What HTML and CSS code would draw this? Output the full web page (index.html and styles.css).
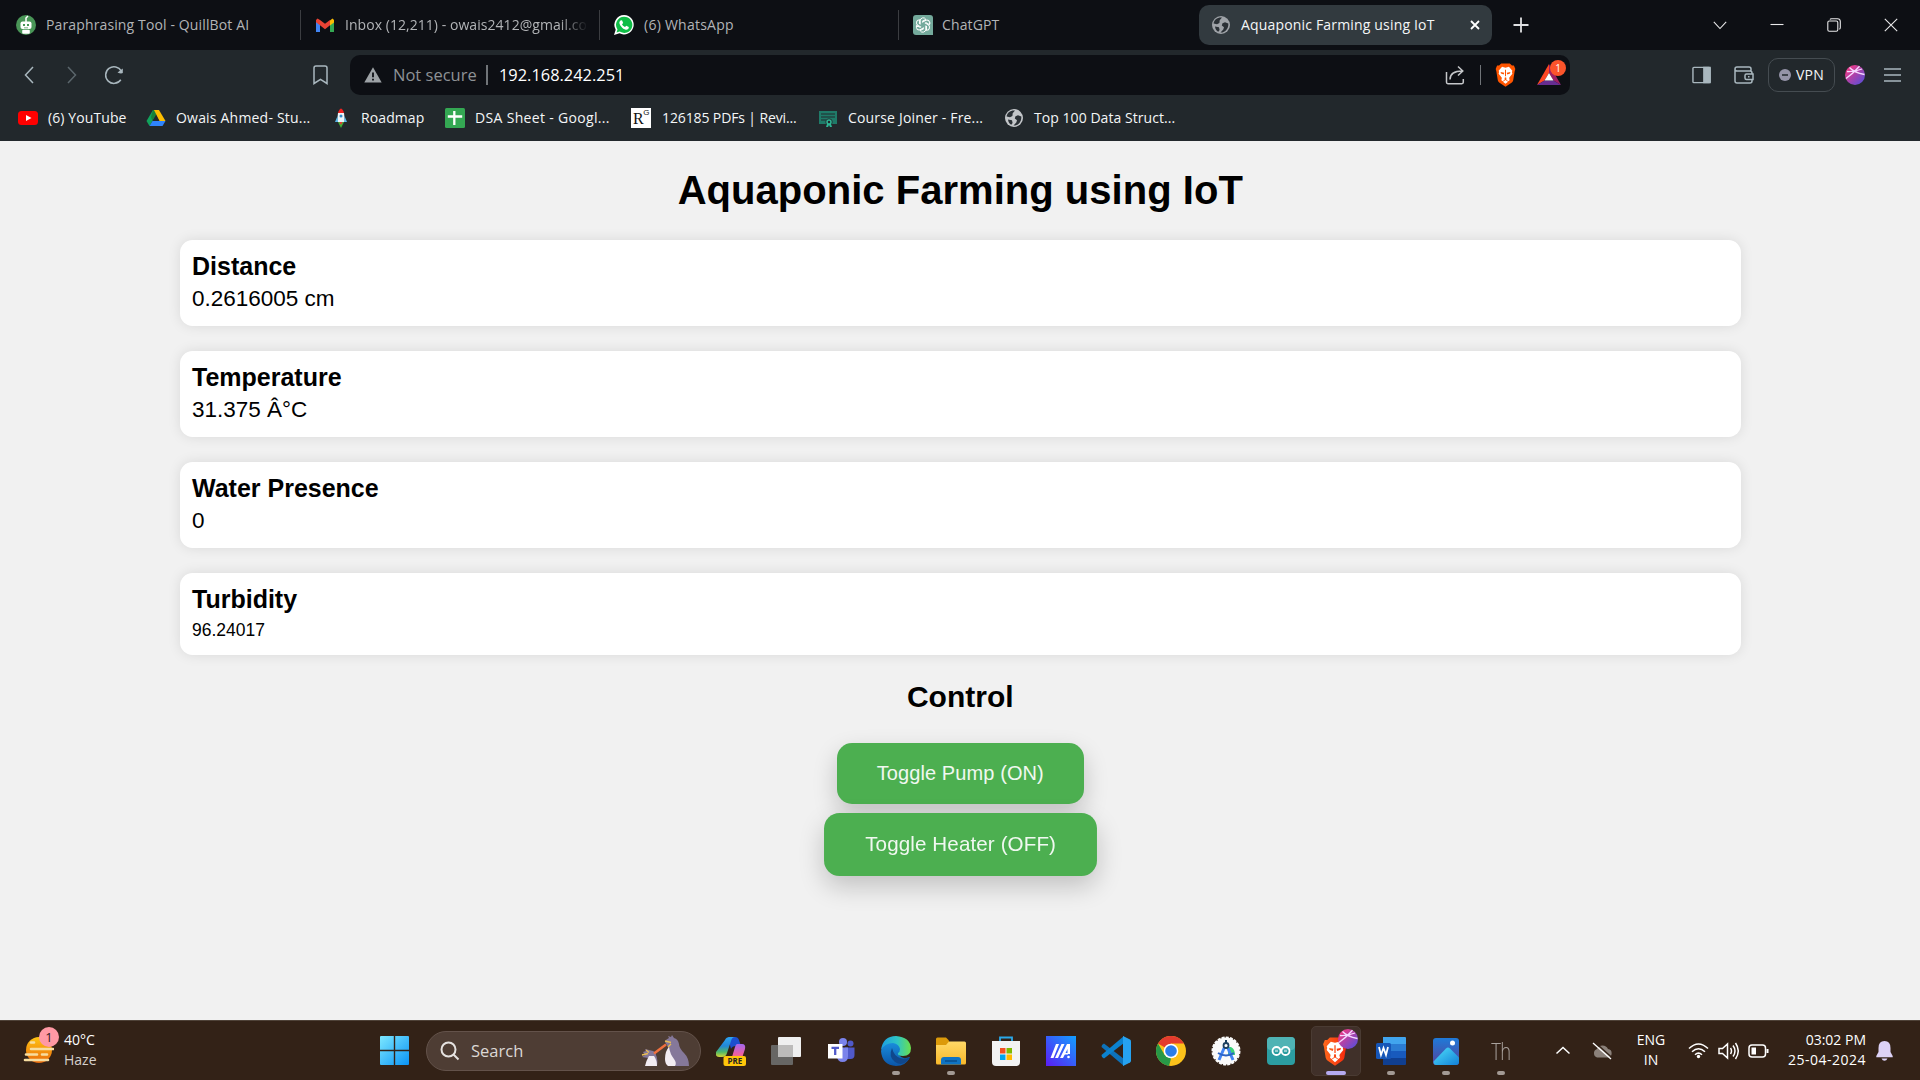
FILE: index.html
```html
<!DOCTYPE html>
<html lang="en">
<head>
<meta charset="utf-8">
<title>Aquaponic Farming using IoT</title>
<link rel="stylesheet" href="styles.css">
</head>
<body>
<svg class="defs" width="0" height="0" aria-hidden="true">
  <defs>
    <symbol id="globe" viewBox="0 0 20 20"><circle cx="10" cy="10" r="9"/><path class="land" d="M11 2.5 8.7 5.2 8.4 8 6 9.2 2.6 8.4C3 4.800 6.500 2 11 2.500ZM17.300 8.500 14 7.300 11.500 8.300 10.800 10.500 13 12.300 12.300 14.500 9.500 17.600C14 18 17.800 13.500 17.300 8.500ZM4 11.500 8 12.300 8.600 15 7.300 16.800C5.500 16 4.200 13.800 4 11.500Z"/></symbol>
    <symbol id="lion" viewBox="0 0 24 28"><path d="M7 .5h10L19.500 3l2.300-.2L23.500 7l-.8 2.500L21 20q-.5 2-2 3l-7 4.800L5 23q-1.500-1-2-3L1.300 9.500.5 7l1.700-4.200L4.500 3Z"/><path fill="#fff" d="m12 5.500 4-1L20 9l-.5 1.500.5 2-3.500 4.300q-.5 1 0 1.700l.3 1.500-1.500 1.200-2.300-1.700v-2.300L12 16.500l-1 .7v2.300l-2.300 1.700-1.500-1.200.3-1.500q.5-.7 0-1.700L4 12.500l.5-2L4 9l4-4.500ZM12 19.800l3 2-3 2.500-3-2.500Z"/><path d="m6.300 10.500 4.200.9-.6 2-3.200-1.200ZM17.700 10.500l-4.200.9.600 2 3.200-1.200ZM11.400 8h1.200v7.500h-1.200Z"/></symbol>
    <symbol id="ball" viewBox="0 0 20 20"><circle cx="10" cy="10" r="10"/><path fill="none" stroke="#f5d8ff" stroke-width="1.300" d="M1 13.500Q8 8.500 14.500 1.200M4.500 2.500Q9 7.500 19.500 9.500M2 6.500Q9 7 17 4"/></symbol>
    <linearGradient id="pinkblue" x1="0" y1="0" x2="1" y2="1"><stop offset=".2" stop-color="#e23b8d"/><stop offset="1" stop-color="#4a4fe0"/></linearGradient>
    <linearGradient id="win" x1="0" y1="0" x2="1" y2="1"><stop stop-color="#7de8ff"/><stop offset="1" stop-color="#0a93f5"/></linearGradient>
    <linearGradient id="edgeTop"><stop stop-color="#1b9de2"/><stop offset=".55" stop-color="#2fc6c4"/><stop offset="1" stop-color="#6be04c"/></linearGradient>
    <linearGradient id="edgeBody" x2="0" y2="1"><stop stop-color="#1a8fdd"/><stop offset="1" stop-color="#0b55a8"/></linearGradient>
    <linearGradient id="folder" x2="0" y2="1"><stop stop-color="#ffd967"/><stop offset="1" stop-color="#f8b82a"/></linearGradient>
    <linearGradient id="armoury" x1="0" y1="1" x2="1" y2="0"><stop stop-color="#5b1cf5"/><stop offset="1" stop-color="#12a0ff"/></linearGradient>
    <linearGradient id="copA" x2="0" y2="1"><stop stop-color="#2da4f0"/><stop offset=".45" stop-color="#2287d8"/><stop offset=".75" stop-color="#4fb868"/><stop offset="1" stop-color="#d5d635"/></linearGradient>
    <linearGradient id="copB" x2="0" y2="1"><stop stop-color="#a368ee"/><stop offset=".6" stop-color="#ee5fa2"/><stop offset="1" stop-color="#f58a55"/></linearGradient>
    <linearGradient id="sun" x2="0" y2="1"><stop stop-color="#ffc512"/><stop offset="1" stop-color="#ea6a0c"/></linearGradient>
    <linearGradient id="braveg"><stop stop-color="#ff6a1c"/><stop offset="1" stop-color="#f5260c"/></linearGradient>
    <linearGradient id="photo" x2="0" y2="1"><stop stop-color="#1f7ad8"/><stop offset="1" stop-color="#54439c"/></linearGradient>
    <linearGradient id="hill" x2="1" y2="1"><stop stop-color="#4fe0fa"/><stop offset="1" stop-color="#1280d8"/></linearGradient>
  </defs>
</svg>

<header class="browser">
  <div class="tabstrip">
    <div class="tab t1">
      <svg class="fav" viewBox="0 0 20 20"><circle cx="10" cy="10" r="10" fill="#499557"/><path fill="none" stroke="#fff" stroke-width="1.500" d="M10 7V3l2-2"/><rect x="4.500" y="6.500" width="11" height="7.500" rx="2" fill="#fff"/><rect x="6.200" y="14.800" width="7.600" height="4" rx="1" fill="#fff"/><path fill="#499557" d="M7 9h2v2H7zM11 9h2v2h-2zM8 12.500h4v.8H8z"/></svg>
      <span class="lbl">Paraphrasing Tool - QuillBot AI</span>
    </div>
    <div class="tab t2">
      <svg class="fav" viewBox="0 0 20 20"><path fill="#4285f4" d="M1 5v12h4V9.500L1 6Z"/><path fill="#34a853" d="M15 9.500V17h4V5.500Z"/><path fill="#fbbc04" d="M15 5.500 17.500 3.600 19 5v2.500l-4 3Z"/><path fill="#ea4335" d="m1 5 1.500-1.600L5 5l5 3.800L15 5v5.300l-5 3.900-5-3.900-4-3Z"/></svg>
      <span class="lbl">Inbox (12,211) - owais2412@gmail.co</span>
    </div>
    <div class="tab t3">
      <svg class="fav" viewBox="0 0 20 20"><path fill="#fff" d="M10.200 0a9.700 9.700 0 1 1-4.700 18.300L0 20l1.700-5.300A9.800 9.800 0 0 1 10.200 0Z"/><path fill="#0fbd46" d="M10.200 1.700a8.100 8.100 0 1 1-4.500 14.800L2.500 17.500l1-3.100a8.100 8.100 0 0 1 6.700-12.700Z"/><path fill="#fff" d="M6.500 5.500 8 5.300 9.200 8 8 9.300c.8 1.500 1.800 2.300 3 2.800l1.300-1.300 2.500 1.300c.2 2-1.500 3-3 2.700C8.500 14.200 5 9.500 5.400 7.300c.2-.8.600-1.500 1.100-1.800Z"/></svg>
      <span class="lbl">(6) WhatsApp</span>
    </div>
    <div class="tab t4">
      <svg class="fav" viewBox="0 0 20 20"><path fill="#74aa9c" d="M3 0h14a3 3 0 0 1 3 3v17H3a3 3 0 0 1-3-3V3a3 3 0 0 1 3-3Z"/><g fill="none" stroke="#fff" stroke-width="1"><path id="petal" d="M7.200 9.500V5.800a3 3 0 0 1 5.600-1.500L9 6.500"/><use href="#petal" transform="rotate(60 10 10)"/><use href="#petal" transform="rotate(120 10 10)"/><use href="#petal" transform="rotate(180 10 10)"/><use href="#petal" transform="rotate(240 10 10)"/><use href="#petal" transform="rotate(300 10 10)"/></g></svg>
      <span class="lbl">ChatGPT</span>
    </div>
    <div class="tab active">
      <svg class="fav globe"><use href="#globe"/></svg>
      <span class="lbl">Aquaponic Farming using IoT</span>
      <svg class="close" viewBox="0 0 10 10"><path d="m1 1 8 8M9 1 1 9"/></svg>
    </div>
    <svg class="plus" viewBox="0 0 16 16"><path d="M8 .5v15M.5 8h15"/></svg>
    <div class="window-buttons">
      <svg viewBox="0 0 14 14"><path d="m.8 3.800 6.200 6.700 6.200-6.700"/></svg>
      <svg viewBox="0 0 14 14"><path d="M.5 6.500h13"/></svg>
      <svg viewBox="0 0 14 14"><rect x=".8" y="3" width="10" height="10.300" rx="1.500"/><path d="M3 1.500Q3.300.7 4.500.7H10.500Q13.300.7 13.300 3.500V9.500Q13.300 11 12.300 11.300"/></svg>
      <svg viewBox="0 0 14 14"><path d="m.8.8 12.400 12.400M13.200.8.8 13.200"/></svg>
    </div>
  </div>

  <div class="toolbar">
    <div class="nav">
      <svg class="back" viewBox="0 0 10 18"><path d="M9 1 1.500 9 9 17"/></svg>
      <svg class="fwd" viewBox="0 0 10 18"><path d="m1 1 7.500 8L1 17"/></svg>
      <svg class="reload" viewBox="0 0 20 20"><path d="M16.800 14.800A8.300 8.300 0 1 1 17.300 6.200"/><path class="dot" d="M13.500 7.500 18.800 3.500V8Q17 9 13.500 7.500Z"/></svg>
      <svg class="mark" viewBox="0 0 15 20"><path d="M1 18.500V3Q1 1 3 1h9Q14 1 14 3v15.500L7.500 14.300Z"/></svg>
    </div>
    <div class="address">
      <svg class="warn" viewBox="0 0 18 16"><path fill="#9da2a6" d="M9 .3 17.700 15.500H.3Z"/><path stroke="#0d0f14" stroke-width="1.800" d="M9 5.500v4.800M9 11.800v1.800"/></svg>
      <span class="lbl insecure">Not secure</span>
      <span class="bar"></span>
      <span class="lbl url">192.168.242.251</span>
      <svg class="share" viewBox="0 0 20 20"><path d="M1.500 7v10.300q0 1.400 1.400 1.400h14q1.400 0 1.400-1.400V14M5 14.500C5 9 8.500 6 17.500 6M13 1.500 17.800 6 13 10.500"/></svg>
      <span class="bar thin"></span>
      <svg class="shield" viewBox="0 0 24 28" fill="#ff5500"><use href="#lion"/></svg>
      <div class="bat">
        <svg viewBox="0 0 24 21"><path fill="#ff4724" d="M12 0 0 21 7.500 16.500 12 9Z"/><path fill="#9e1f63" d="M12 0 24 21 16.500 16.500 12 9Z"/><path fill="#662d91" d="M0 21h24l-7.500-4.500h-9Z"/><path fill="#fff" d="m12 9 4.500 7.500h-9Z"/></svg>
        <span class="badge">1</span>
      </div>
    </div>
    <div class="tools">
      <svg class="side" viewBox="0 0 20 18"><rect x="1" y="1" width="18" height="16" rx="1"/><path class="solid" d="M12.500 1H19v16h-6.500Z"/></svg>
      <svg class="wallet" viewBox="0 0 20 18"><path d="M17 5V3q0-2-2-2H3Q1 1 1 3v12q0 2 2 2h13q2 0 2-2v-1.500M1 3.500Q1.500 5 3 5h13q2 0 2 2v1M12.500 8H19v5.500h-6.500Q11 13.500 11 12V9.500Q11 8 12.500 8ZM14 10.800h1.500"/></svg>
      <div class="vpn"><svg viewBox="0 0 12 12"><circle cx="6" cy="6" r="6" fill="#9594a8"/><path stroke="#22282c" stroke-width="1.500" d="M3 6h6"/></svg><span class="lbl">VPN</span></div>
      <svg class="avatar" fill="url(#pinkblue)"><use href="#ball"/></svg>
      <svg class="menu" viewBox="0 0 17 14"><path d="M0 1h17M0 7h17M0 13h17"/></svg>
    </div>
  </div>

  <nav class="bookmarks">
    <div class="bm b1"><svg viewBox="0 0 20 20"><rect y="3" width="20" height="14" rx="3.500" fill="#f00"/><path fill="#fff" d="m8 7 5.500 3L8 13Z"/></svg><span class="lbl">(6) YouTube</span></div>
    <div class="bm b2"><svg viewBox="0 0 20 20"><path fill="#11a25c" d="M7 2h3L6.500 13 3.500 18 .5 13Z"/><path fill="#188038" d="M7 2h3v5L6.500 13 5 9Z"/><path fill="#fcbd00" d="M8 2h5l6.500 11h-6Z"/><path fill="#22282c" d="m10 7.500 3.200 5.500H6.800Z"/><path fill="#2f84fc" d="M6.500 13h13l-3 5h-13Z"/></svg><span class="lbl">Owais Ahmed- Stu...</span></div>
    <div class="bm b3"><svg viewBox="0 0 20 20"><path fill="#e22" d="M7 5q1-4 3-4.500Q12 1 13 5Z"/><path fill="#eef4f8" d="M7 5h6l1 9H6Z"/><path fill="#58b8e8" d="M6.500 8 4 14h3ZM13.500 8 16 14h-3Z"/><circle cx="10" cy="8" r="1.500" fill="#2c89c8"/><path fill="#3fae35" d="M7 14h6l-3 6Z"/><path fill="#e33" d="M8.500 14h3l-1.500 3Z"/></svg><span class="lbl">Roadmap</span></div>
    <div class="bm b4"><svg viewBox="0 0 20 20"><rect width="20" height="20" rx="1.500" fill="#34a853"/><path stroke="#fff" stroke-width="2.300" d="M9.300 3v14M2.800 8.500h14.400"/></svg><span class="lbl">DSA Sheet - Googl...</span></div>
    <div class="bm b5"><span class="rg">R<sup>G</sup></span><span class="lbl">126185 PDFs | Revi...</span></div>
    <div class="bm b6"><svg viewBox="0 0 20 20"><path fill="#1f7a68" d="M1 3h18v13H1Z"/><path stroke="#22282c" stroke-width="1.200" d="M3 6h14M3 9h14M3 12h5"/><circle cx="11" cy="14" r="3.500" fill="#22282c"/><circle cx="11" cy="14" r="2" fill="none" stroke="#2fb594" stroke-width="1.500"/><path fill="#2fb594" d="m9 16-1 3h2l1-2 1 2h2l-1-3Z"/></svg><span class="lbl">Course Joiner - Fre...</span></div>
    <div class="bm b7"><svg class="globe light"><use href="#globe"/></svg><span class="lbl">Top 100 Data Struct...</span></div>
  </nav>
</header>

<main class="page">
  <h1>Aquaponic Farming using IoT</h1>
  <section class="cards">
    <article class="card"><h3>Distance</h3><p>0.2616005 cm</p></article>
    <article class="card"><h3>Temperature</h3><p>31.375 Â°C</p></article>
    <article class="card"><h3>Water Presence</h3><p>0</p></article>
    <article class="card small"><h3>Turbidity</h3><p>96.24017</p></article>
  </section>
  <h2>Control</h2>
  <div class="buttons">
    <button class="btn">Toggle Pump (ON)</button>
    <button class="btn hover">Toggle Heater (OFF)</button>
  </div>
</main>

<footer class="taskbar">
  <div class="weather">
    <div class="haze">
      <svg viewBox="0 0 31 31"><circle cx="16" cy="16" r="13" fill="url(#sun)"/><path stroke="#f7dda0" stroke-width="2.600" stroke-linecap="round" d="M8 8.500h3M8 15h22M3 20.500h11M19 20.500h5M2 26h23"/></svg>
      <span class="count">1</span>
    </div>
    <div class="reading"><span class="lbl">40°C</span><span class="lbl dim">Haze</span></div>
  </div>
  <svg class="start" viewBox="0 0 29 29"><path fill="url(#win)" d="M1 0h12.800v13.800H0V1q0-1 1-1ZM15.200 0H28q1 0 1 1v12.800H15.200ZM0 15.200h13.800V29H1q-1 0-1-1ZM15.200 15.200H29V28q0 1-1 1H15.200Z"/></svg>
  <div class="search">
    <svg class="glass" viewBox="0 0 20 20"><circle cx="8.500" cy="8.500" r="7"/><path d="m13.500 13.500 5 5"/></svg>
    <span class="lbl">Search</span>
    <svg class="birds" viewBox="0 0 49 32"><path fill="#85789a" d="M24 7q1-3 4-4l-1-2 3 1 1-2 2 3q4 1 5 6 0 4 5 9 5 5 5 13H28q-3-3-2-10 1-5 1-9Z"/><path fill="#f2ecf2" d="M28 12q-4 4-4 12 0 5 3 7h7q2-3-1-7-4-5-5-12Z"/><path fill="#85789a" d="m2 17 3-1-1-2 4 1 4 1q3 1 3 4 2 4 1 11H6q0-4 1-8l-6-1 3-2Z"/><path fill="#f2ecf2" d="M8 21q-3 5-4 10h12q0-6-3-10Z"/><path stroke="#f0703f" stroke-width="2.400" d="m13 18.500 12-9"/><path stroke="#e9bd54" stroke-width="1.300" d="m1 20 6-1.500M5 15l3 2.500M24 6l6 1.500M27 12l3-3"/></svg>
  </div>
  <div class="apps">
    <div class="app"><svg viewBox="0 0 30 30"><path fill="#1c4fcf" d="M12 1h7q3 0 4 3l2 6h-5q-4 0-5 3Z"/><path fill="url(#copB)" d="M21 8h5q4 0 3 5l-3 9q-1 3-4 3H12q3 0 4-4l3-10q1-3 2-3Z"/><path fill="url(#copA)" d="M9 4q1-3 5-3h5q-3 0-4 4l-4 12q-1 4-5 4H3q-4 0-3-5Z"/><rect x="7.500" y="20" width="22.500" height="10" rx="2" fill="#ffc60a"/><text x="18.800" y="28" text-anchor="middle" class="pre">PRE</text></svg></div>
    <div class="app"><svg viewBox="0 0 30 30"><rect x="0" y="9" width="22" height="20" rx="1" fill="#676664"/><rect x="7" y="1" width="23" height="20" rx="1" fill="#efefef"/><path fill="#bcbbba" d="M7 9h15v12H7Z"/></svg></div>
    <div class="app"><svg viewBox="0 0 30 30"><circle cx="17" cy="6" r="4" fill="#7b83eb"/><circle cx="24.500" cy="7.500" r="3" fill="#5059c9"/><path fill="#5059c9" d="M19 11.500h9.500V19q0 4-4 4H19Z"/><path fill="#7b83eb" d="M11 11.500h11V20q0 6-5.500 6-5 0-5.500-6Z"/><rect x="2" y="8" width="14.500" height="14.500" fill="#fff"/><path stroke="#5059c9" stroke-width="2.300" d="M5.500 11.800h7.500M9.200 11.500V19"/></svg></div>
    <div class="app run"><svg viewBox="0 0 30 30"><path fill="url(#edgeBody)" d="M0 15Q2 5 12 6q8 1 8 8 0 3-2 5 3 4 7 3l4-1Q25 30 15 30 1 29 0 15Z"/><path fill="url(#edgeTop)" d="M0 14Q2 0 15 0 29 1 30 12q0 8-8 8-6 0-5-3 2-1 2-4-1-5-7-6Q4 7 0 14Z"/><path fill="#10478c" d="M11 12q-4 9 3 14 6 4 11 0 3-2 4-5-5 3-10 1-6-2-8-10Z"/></svg></div>
    <div class="app run"><svg viewBox="0 0 30 30"><path fill="#dc9a0a" d="M0 3q0-1.500 1.500-1.500H10l3 3v5H0Z"/><path fill="url(#folder)" d="M0 9h10l3-3.500h15.500Q30 5.500 30 7v20q0 1.500-1.500 1.500h-27Q0 28.500 0 27Z"/><path fill="#0f74c4" d="M5 28.500V24q0-3 3-3h14q3 0 3 3v4.500Z"/><path stroke="#0a4e8c" stroke-width="1.500" d="M9 25h12"/></svg></div>
    <div class="app"><svg viewBox="0 0 30 30"><path fill="none" stroke="#2aa8e8" stroke-width="1.800" d="M9 6V1.500h12V6"/><path fill="#f3f3f3" d="M1 5h28v21q0 4-4 4H5q-4 0-4-4Z"/><path fill="#f25022" d="M9 12h5.500v5.500H9z"/><path fill="#7fba00" d="M15.500 12H21v5.500h-5.500z"/><path fill="#00a4ef" d="M9 18.500h5.500V24H9z"/><path fill="#ffb900" d="M15.500 18.500H21V24h-5.500z"/></svg></div>
    <div class="app"><svg viewBox="0 0 30 30"><path fill="url(#armoury)" d="M0 0h30v30H0Z"/><path fill="#fff" d="M10 8h3L7.500 22h-3ZM15.500 8h3L12 22H9ZM21 8h3v10h-2.500v-5L17 22h-3Z"/><path fill="#fff" d="M17 17h5v1.500h-5z"/><circle cx="22.500" cy="21" r="1.300" fill="#fff"/></svg></div>
    <div class="app"><svg viewBox="0 0 30 30"><path fill="#0d72ba" d="m1 9 2-1.500L23 23v7L.5 11Z"/><path fill="#0b82cf" d="m1 21 2 1.500L23 7V0L.5 19Z"/><path fill="#26a2f0" d="M22 0 29 3.500q1 .5 1 2v19q0 1.500-1 2L22 30Z"/></svg></div>
    <div class="app"><svg viewBox="0 0 30 30"><circle cx="15" cy="15" r="15" fill="#fcc21b"/><path fill="#e33b2e" d="M15 15 2 7.500A15 15 0 0 1 28 7.500H15Z"/><path fill="#279847" d="M2 7.500 8.500 18.800 15 22.500 13 29.900A15 15 0 0 1 2 7.500Z"/><circle cx="15" cy="15" r="7.300" fill="#fff"/><circle cx="15" cy="15" r="5.800" fill="#2a7de9"/></svg></div>
    <div class="app"><svg viewBox="0 0 30 30"><circle cx="15" cy="15" r="13.500" fill="#fafafa" stroke="#fafafa" stroke-width="2" stroke-dasharray="3 1.200"/><path fill="#3ad178" d="M17 11h3q4 2 4 8h-7Z"/><path fill="none" stroke="#4285f4" stroke-width="3" d="M14 10 8 24M16 10l6 14"/><path fill="none" stroke="#2b62c4" stroke-width="2" d="M7 17q8 5 16 0"/><circle cx="15" cy="9.500" r="2.500" fill="#fff" stroke="#1c3f5f" stroke-width="1.800"/><path stroke="#1c3f5f" stroke-width="2" d="M15 4v3"/></svg></div>
    <div class="app"><svg viewBox="0 0 30 30"><rect x="1" y="1" width="28" height="28" rx="4" fill="#2c9da1"/><rect x="1" y="1" width="28" height="13" rx="4" fill="#4fb3b4"/><g fill="none" stroke="#fff" stroke-width="1.800"><circle cx="10.500" cy="15" r="4"/><circle cx="19.500" cy="15" r="4"/><path stroke-width="1" d="M9 15h3M18 15h3"/></g></svg></div>
    <div class="app current"><svg viewBox="0 0 30 30" fill="url(#braveg)"><use href="#lion" x="1" y="1" width="26" height="29"/></svg><svg class="pin" fill="url(#pinkblue)"><use href="#ball"/></svg></div>
    <div class="app run"><svg viewBox="0 0 30 30"><path fill="#41a5ee" d="M7 1h22q1 0 1 1v6H7Z"/><path fill="#2b7cd3" d="M7 8h23v7H7Z"/><path fill="#185abd" d="M7 15h23v7H7Z"/><path fill="#103f91" d="M7 22h23v6q0 1-1 1H7Z"/><rect y="7" width="15" height="16" rx="1.500" fill="#1656b8"/><path fill="none" stroke="#fff" stroke-width="1.800" d="m3 11 2 8 2.500-7L10 19l2-8"/></svg></div>
    <div class="app run"><svg viewBox="0 0 30 30"><rect x="2" y="2" width="26" height="27" rx="3" fill="url(#photo)"/><path fill="url(#hill)" d="M2.500 25.500 15 12.500q2-2 4 0l9 9V26q0 3-3 3H5q-2.500 0-2.500-3.500Z"/><circle cx="21.500" cy="7" r="2.500" fill="#fff"/></svg></div>
    <div class="app run"><span class="th">Th</span></div>
  </div>
  <div class="tray">
    <svg class="up" viewBox="0 0 16 9"><path d="m1.500 7.500 6.500-6 6.500 6"/></svg>
    <svg class="cloud" viewBox="0 0 21 18"><path fill="#8b817a" d="M5 15.500a4.500 4.500 0 0 1 0-8.500 6 6 0 0 1 11 0 4.300 4.300 0 0 1 0 8.500Z"/><path stroke="#332217" stroke-width="1.400" d="m2.500 0 18 16"/><path stroke="#fff" stroke-width="1.400" d="m1 1 18 16"/></svg>
    <div class="lang"><span class="lbl">ENG</span><span class="lbl">IN</span></div>
    <svg class="wifi" viewBox="0 0 21 16"><path d="M1 6q9.500-9 19 0M4 9.300q6.500-6 13 0M7 12.300q3.500-3.300 7 0"/><circle cx="10.500" cy="14" r="1.700"/></svg>
    <svg class="vol" viewBox="0 0 21 18"><path d="M1 6.500h3.500L9.500 2v14l-5-4.500H1ZM12.500 6q2 3 0 6M15 3.500q4 5.500 0 11M17.500 1q5.500 8 0 16"/></svg>
    <svg class="batt" viewBox="0 0 21 14"><rect x="1" y="1" width="16.500" height="12" rx="3"/><path class="solid" d="M3.500 3.500H8v7H3.500ZM18.500 5h2v4h-2Z"/></svg>
    <div class="clock"><span class="lbl">03:02 PM</span><span class="lbl date">25-04-2024</span></div>
    <svg class="bell" viewBox="0 0 17 20"><path fill="#ddd2f6" d="M8.500 0q6 0 6 7v4l2.200 4v1.200H.3V15l2.200-4V7q0-7 6-7ZM5.500 17.500h6q-1 2.300-3 2.300t-3-2.300Z"/></svg>
  </div>
</footer>
</body>
</html>
```
FILE: styles.css
```css
* { box-sizing: border-box; }
body {
  margin: 0;
  width: 1920px;
  height: 1080px;
  overflow: hidden;
  display: flex;
  flex-direction: column;
  background: #f1f1f1;
  font-family: "Liberation Sans", Arial, sans-serif;
}
.defs { position: absolute; }
svg { flex: none; display: block; }
.lbl { font-family: "Open Sans", "Noto Sans", sans-serif; font-size: 14px; line-height: 20px; white-space: nowrap; }

/* browser chrome */
.browser { height: 141px; flex: none; background: #22282c; color: #f4f6f7; }
.tabstrip { height: 50px; background: #0d0f14; display: flex; align-items: center; }
.tab { height: 30px; display: flex; align-items: center; gap: 10px; color: #b2b4b7; border-right: 1px solid #3b3d41; letter-spacing: .13px; }
.fav { width: 20px; height: 20px; }
.t1 { width: 301px; padding-left: 16px; }
.t2 { width: 299px; padding: 0 0 0 14px; letter-spacing: .05px; }
.t2 .lbl { -webkit-mask-image: linear-gradient(90deg, #000 215px, transparent 243px); mask-image: linear-gradient(90deg, #000 215px, transparent 243px); }
.t3 { width: 299px; padding-left: 14px; letter-spacing: .25px; }
.t4 { width: 300px; padding-left: 14px; border-right: 0; gap: 9px; }
.active { width: 293px; height: 40px; padding: 0 12px; border: 0; border-radius: 10px; background: #323a3f; color: #f4f6f7; letter-spacing: .17px; }
.globe { width: 20px; height: 20px; fill: #9fa3a8; }
.globe.light { fill: #c3c6c9; }
.land { fill: #2b3136; }
.close { width: 10px; height: 10px; margin-left: auto; fill: none; stroke: #fff; stroke-width: 1.8; }
.plus { width: 16px; height: 16px; margin-left: 21px; stroke: #dfe1e3; stroke-width: 1.8; }
.window-buttons { margin-left: auto; padding-right: 22px; display: flex; gap: 43px; }
.window-buttons svg { width: 14px; height: 14px; fill: none; stroke: #e9e9ea; stroke-width: 1.1; }

.toolbar { height: 50px; display: flex; align-items: center; }
.nav { width: 350px; display: flex; align-items: center; padding-left: 24px; }
.nav svg { fill: none; stroke: #a9b7be; stroke-width: 1.5; }
.back, .fwd { width: 10px; height: 18px; }
.nav .fwd { margin-left: 33px; stroke: #5b666c; }
.reload { width: 20px; height: 20px; margin-left: 27px; }
.nav .dot { fill: #a9b7be; stroke: none; }
.mark { width: 15px; height: 20px; margin-left: 189px; }
.address { width: 1220px; height: 40px; border-radius: 10px; background: #0d0f14; display: flex; align-items: center; padding: 0 4px 0 14px; }
.warn { width: 18px; height: 16px; }
.insecure { margin-left: 11px; width: 84px; font-size: 16.500px; color: #8e9296; }
.bar { width: 2px; height: 20px; background: #707478; margin-left: 9px; }
.url { margin-left: 11px; font-size: 16.400px; color: #fff; }
.share { width: 20px; height: 20px; margin-left: auto; fill: none; stroke: #c5c7ca; stroke-width: 1.5; }
.bar.thin { width: 1px; margin-left: 15px; }
.shield { width: 21px; height: 24px; margin-left: 14px; }
.bat { position: relative; width: 29px; height: 32px; margin-left: 21px; padding-top: 5px; }
.bat svg { width: 24px; height: 21px; }
.badge { position: absolute; right: 0; top: 1px; width: 16px; height: 16px; border-radius: 8px; background: #fb542b; color: #fff; font: 10px/16px "Open Sans", sans-serif; text-align: center; }
.tools { flex: 1; display: flex; align-items: center; padding-left: 122px; }
.tools svg { fill: none; stroke: #a9b7be; stroke-width: 1.5; }
.solid { fill: #a9b7be; }
.tools .side { width: 19px; height: 18px; }
.tools .wallet { width: 20px; height: 18px; margin-left: 23px; }
.vpn { width: 67px; height: 34px; margin-left: 14px; border: 1px solid #454c51; border-radius: 10px; display: flex; align-items: center; justify-content: center; gap: 5px; }
.vpn svg { width: 12px; height: 12px; stroke: none; }
.vpn .lbl { letter-spacing: .3px; }
.tools .avatar { width: 20px; height: 20px; margin-left: 10px; fill: url(#pinkblue); stroke: none; }
.tools .menu { width: 17px; height: 14px; margin-left: 19px; }

.bookmarks { height: 41px; padding: 0 0 5px 18px; display: flex; align-items: center; }
.bm { display: flex; align-items: center; gap: 10px; }
.bm svg { width: 20px; height: 20px; }
.b1 { width: 128px; letter-spacing: .1px; }
.b2 { width: 185px; letter-spacing: .2px; }
.b3 { width: 114px; letter-spacing: .1px; }
.b4 { width: 186px; letter-spacing: .33px; }
.b5 { width: 187px; gap: 11px; letter-spacing: -.12px; }
.b6 { width: 186px; letter-spacing: .18px; }
.b7 { width: 180px; letter-spacing: .05px; }
.rg { width: 20px; height: 20px; background: #fff; color: #111; font: 16px/22px "Liberation Serif", serif; letter-spacing: 0; padding-left: 2px; display: flex; }
.rg sup { font: 8px/10px "Liberation Sans", sans-serif; margin-left: -.500px; }

/* dashboard */
.page { flex: 1; padding: 26px 179.500px 0 180px; text-align: center; color: #000; }
h1 { margin: 0 0 26px; font-size: 40px; line-height: 47px; letter-spacing: .03px; }
.cards { display: flex; flex-direction: column; gap: 25px; }
.card { height: 86px; padding: 12px 12px 0; border-radius: 12.500px; background: #fff; box-shadow: 0 0 12.500px rgba(0, 0, 0, .1); text-align: left; }
.card.small { height: 82px; }
.card h3 { margin: 0; font-size: 25px; line-height: 29px; }
.card p { margin: 5px 0 0; font-size: 22.500px; line-height: 26px; }
.card.small p { margin-top: 6px; font-size: 17.500px; line-height: 20px; }
h2 { margin: 25px 0; font-size: 30px; line-height: 34px; }
.buttons { display: flex; flex-direction: column; align-items: center; gap: 10px; margin-top: 29px; }
.btn { height: 61px; padding: 0 40px; border: 0; border-radius: 15px; background: #4caf50; color: #f0f8f0; font: 20px "Liberation Sans", Arial, sans-serif; letter-spacing: .1px; box-shadow: 0 10px 25px rgba(0, 0, 0, .2); }
.btn.hover { transform: scale(1.03); }

/* taskbar */
.taskbar { height: 60px; flex: none; background: #332217; border-top: 1px solid #4f4238; display: flex; align-items: center; color: #fff; }
.weather { width: 380px; display: flex; padding-left: 23px; }
.haze { position: relative; width: 41px; height: 40px; }
.haze svg { width: 31px; height: 31px; margin-top: 4px; }
.count { position: absolute; left: 16px; top: -3px; width: 20px; height: 20px; border-radius: 10px; background: #ff99a4; color: #33191b; font: 13px/20px "Open Sans", sans-serif; text-align: center; }
.reading, .lang, .clock { display: flex; flex-direction: column; padding-bottom: 2px; }
.dim { color: #d5d0cc; }
.start { width: 29px; height: 29px; }
.search { width: 275px; height: 40px; margin-left: 17px; border: 1px solid #63524a; border-radius: 20px; background: #4e3d34; display: flex; align-items: center; padding: 0 10px 0 13px; }
.glass { width: 20px; height: 20px; fill: none; stroke: #e5e2e0; stroke-width: 2; }
.search .lbl { margin-left: 11px; font-size: 16.500px; color: #dcd8d5; }
.birds { width: 49px; height: 32px; margin-left: auto; }
.apps { display: flex; margin-left: 5px; gap: 5px; }
.app { position: relative; width: 50px; height: 50px; border-radius: 5px; display: flex; align-items: center; justify-content: center; }
.app svg { width: 30px; height: 30px; }
.app.run::after, .app.current::after { content: ""; position: absolute; left: 21px; bottom: 1px; width: 8px; height: 4px; border-radius: 2px; background: #a39a94; }
.app.current { background: #403029; border: 1px solid #4a3b33; }
.app.current::after { left: 14px; bottom: 0; width: 20px; background: #b5aaf0; }
.app .pin { position: absolute; left: 26px; top: 2px; width: 20px; height: 20px; }
.pre { font: bold 8px "Open Sans", sans-serif; fill: #222; }
.th { font: 300 23px "Open Sans", sans-serif; color: #aaa39e; letter-spacing: -1px; transform: scaleX(.8); }
.tray { flex: 1; display: flex; align-items: center; padding-left: 29px; }
.tray svg { fill: none; stroke: #fff; stroke-width: 1.5; }
.up { width: 16px; height: 9px; }
.tray .cloud { width: 21px; height: 18px; margin-left: 21px; stroke: none; }
.lang { width: 30px; margin-left: 23px; align-items: center; }
.wifi { width: 21px; height: 17px; margin-left: 22px; }
.wifi circle { fill: #fff; stroke: none; }
.vol { width: 21px; height: 18px; margin-left: 9px; }
.batt { width: 21px; height: 14px; margin-left: 9px; }
.batt .solid { fill: #fff; stroke: none; }
.clock { width: 80px; margin-left: 17px; align-items: flex-end; }
.date { letter-spacing: .5px; }
.tray .bell { width: 17px; height: 20px; margin-left: 10px; stroke: none; }
```
